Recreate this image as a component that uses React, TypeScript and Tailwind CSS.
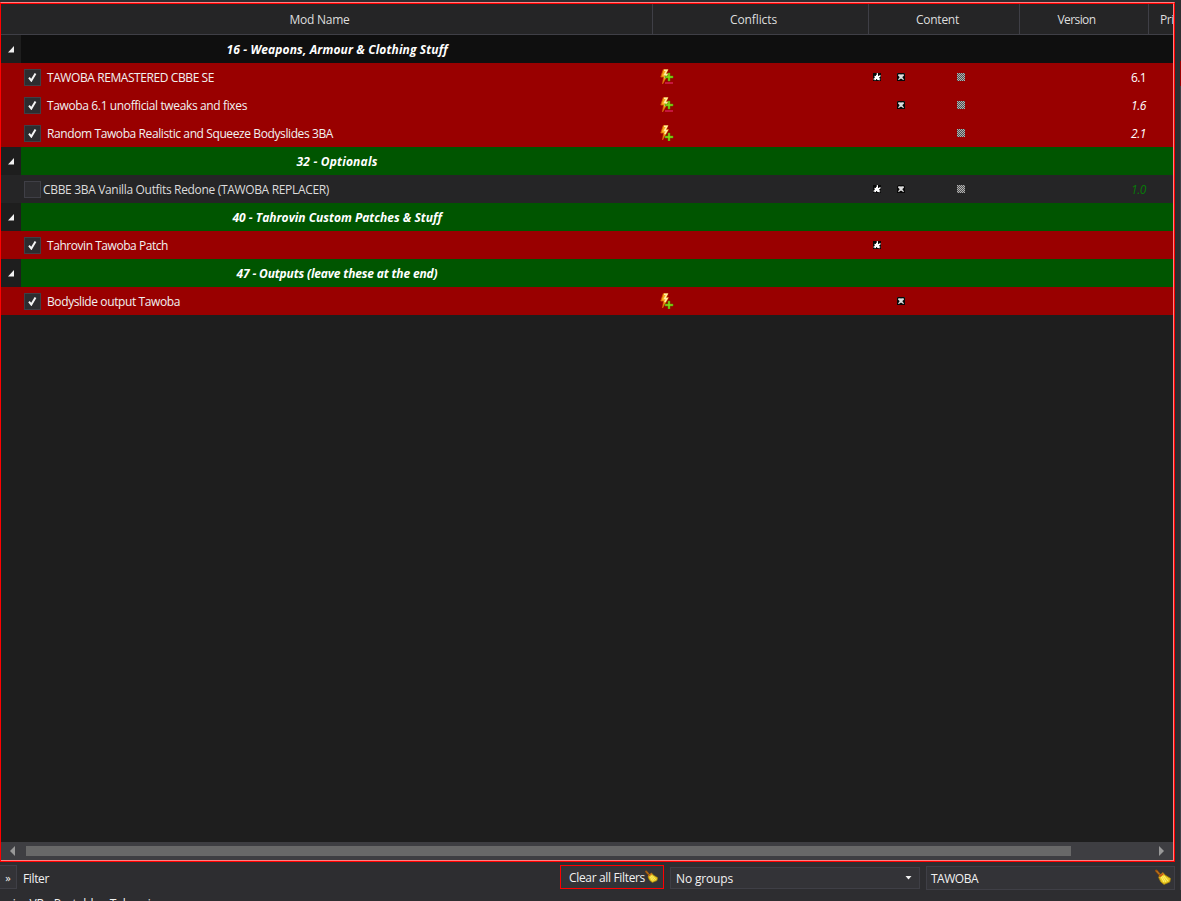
import React from "react";

type Conflict = "mixed" | "plus";
type Row =
  | { kind: "group"; title: string; tone: string; spacing: string }
  | { kind: "mod"; title: string; on: boolean; spacing: string; conflict?: Conflict; content: number[]; version?: string; versionClass?: string };

const rows: Row[] = [
  { kind: "group", title: "16 - Weapons, Armour & Clothing Stuff", tone: "bg-[#0f0f0f]", spacing: "w-[221px]" },
  { kind: "mod", title: "TAWOBA REMASTERED CBBE SE", on: true, spacing: "w-[167px]", conflict: "mixed", content: [0, 1, 3], version: "6.1", versionClass: "text-white" },
  { kind: "mod", title: "Tawoba 6.1 unofficial tweaks and fixes", on: true, spacing: "w-[200px]", conflict: "mixed", content: [1, 3], version: "1.6", versionClass: "italic text-white" },
  { kind: "mod", title: "Random Tawoba Realistic and Squeeze Bodyslides 3BA", on: true, spacing: "w-[286px]", conflict: "plus", content: [3], version: "2.1", versionClass: "italic text-white" },
  { kind: "group", title: "32 - Optionals", tone: "bg-[#005500]", spacing: "w-[81px]" },
  { kind: "mod", title: "CBBE 3BA Vanilla Outfits Redone (TAWOBA REPLACER)", on: false, spacing: "w-[286px]", content: [0, 1, 3], version: "1.0", versionClass: "italic text-[#087a08]" },
  { kind: "group", title: "40 - Tahrovin Custom Patches & Stuff", tone: "bg-[#005500]", spacing: "w-[209px]" },
  { kind: "mod", title: "Tahrovin Tawoba Patch", on: true, spacing: "w-[121px]", content: [0] },
  { kind: "group", title: "47 - Outputs (leave these at the end)", tone: "bg-[#005500]", spacing: "w-[201px]" },
  { kind: "mod", title: "Bodyslide output Tawoba", on: true, spacing: "w-[133px]", conflict: "plus", content: [1] },
];

/* Spreads the tracking so that a label takes exactly the width of its box. */
function Label({ children, className }: { children: string; className: string }) {
  const ref = React.useRef<HTMLSpanElement>(null);
  const [tracking, setTracking] = React.useState(0);
  React.useLayoutEffect(() => {
    const box = ref.current;
    if (!box) return;
    const inner = box.firstElementChild as HTMLElement;
    inner.style.letterSpacing = "0px";
    const gap = (box.clientWidth - inner.getBoundingClientRect().width) / children.length;
    inner.style.letterSpacing = `${gap}px`;
    setTracking(gap);
  }, [children]);
  return (
    <span ref={ref} className={`block shrink-0 whitespace-nowrap pt-[2px] ${className}`}>
      <span style={{ letterSpacing: `${tracking}px` }}>{children}</span>
    </span>
  );
}

const maps = [
  ["00028000", "00039000", "01199164", "05999993", "03999930", "28999971", "37918971", "01100120"],
  ["10000001", "04655640", "07888870", "01788710", "00588500", "02877820", "06400460", "00000000"],
];
const greys = ["#080808", "#222222", "#404040", "#555555", "#777777", "#888888", "#a0a0a0", "#bcbcbc", "#dddddd", "#ffffff"];

function ContentIcon({ type }: { type: number }) {
  if (type === 3) {
    return (
      <svg width="8" height="8" shapeRendering="crispEdges">
        {Array.from({ length: 64 }, (_, i) => (
          <rect key={i} x={i % 8} y={Math.floor(i / 8)} width="1" height="1" fill={((i % 8) + Math.floor(i / 8)) % 2 ? "#505050" : "#b0b0b0"} />
        ))}
      </svg>
    );
  }
  return (
    <svg width="8" height="8" shapeRendering="crispEdges">
      {maps[type].flatMap((line, y) =>
        line.split("").map((v, x) => <rect key={`${x}-${y}`} x={x} y={y} width="1" height="1" fill={greys[Number(v)]} />)
      )}
    </svg>
  );
}

function Bolt({ kind }: { kind: Conflict }) {
  const y = kind === "mixed" ? 4 : 8;
  return (
    <svg width="14" height="16">
      <path d="M3.3.5H8L6.2 4.5H8.5L2.5 15L3.7 8H.8Z" fill="#f8a719" stroke="#d26008" strokeWidth=".8" />
      <path d="M4 1.2H7L4.6 5.5H7L4.8 9" fill="none" stroke="#fff0a0" strokeWidth="1.5" />
      {kind === "mixed" && <path d="M5 13h8v2H5z" fill="#c5163e" />}
      <path d={`M8 ${y}h2v3h3v2h-3v3H8v-3H5v-2h3z`} fill="#84d414" stroke="#4d9208" strokeWidth=".5" />
    </svg>
  );
}

function Broom({ size }: { size: number }) {
  return (
    <svg width={size} height={size} viewBox="0 0 16 16">
      <path d="M1.4 1.8L5 6" stroke="#8c4c0d" strokeWidth="2.6" strokeLinecap="round" />
      <path d="M1.3 1.7L4.5 5.2" stroke="#d18420" strokeWidth="1" />
      <path d="M8 3.6L10 6L15.5 9.4L14.8 13L9 15.4L5.7 12.7L3.7 8.5L4.3 6.8Z" fill="#e8ca24" stroke="#a98109" strokeWidth=".8" />
      <path d="M7.5 7L11 13M9 7L13 12M6.3 8L9 13" stroke="#fff169" strokeWidth="1.1" />
      <path d="M4.5 7.8L8.5 4.5" stroke="#c6401c" strokeWidth="1.2" />
    </svg>
  );
}

function Check({ on }: { on: boolean }) {
  return (
    <span className="flex h-[17px] w-[17px] shrink-0 items-start justify-center border border-[#3f3f46] bg-[#2d2d30] pt-[3px]">
      {on && (
        <svg width="9" height="9">
          <path d="M1 4.7L3.3 7.6L7.5 .6" fill="none" stroke="#f4f4f4" strokeWidth="2" />
        </svg>
      )}
    </span>
  );
}

function ModRow({ row }: { row: Row }) {
  if (row.kind === "group") {
    return (
      <div className="flex h-7">
        <div className="flex w-5 items-center bg-[#1e1e1e] pl-[7px]">
          <svg width="6" height="7"><path d="M6 0V6.5H0Z" fill="#f1f1f1" /></svg>
        </div>
        <div className={`flex flex-1 items-center ${row.tone}`}>
          <div className="flex w-[632px] justify-center">
            <Label className={`font-bold italic text-white ${row.spacing}`}>{row.title}</Label>
          </div>
        </div>
      </div>
    );
  }
  return (
    <div className={`flex h-7 items-center ${row.on ? "bg-[#990000]" : "bg-[#252526]"}`}>
      <div className={`flex w-[652px] items-center pl-[23px] ${row.on ? "gap-[6px] text-[#f1f1f1]" : "gap-[2px] text-[#dcdcdc]"}`}>
        <Check on={row.on} />
        <Label className={row.spacing}>{row.title}</Label>
      </div>
      <div className="flex w-[216px] pl-[7px]">{row.conflict && <Bolt kind={row.conflict} />}</div>
      <div className="grid w-[151px] grid-cols-[24px_24px_36px_24px] pl-1">
        {[0, 1, 2, 3].map((n) => (
          <span key={n}>{row.content.includes(n) && <ContentIcon type={n} />}</span>
        ))}
      </div>
      <div className={`flex w-[126px] justify-end ${row.versionClass ?? ""}`}>
        {row.version && <Label className="w-[15px]">{row.version}</Label>}
      </div>
    </div>
  );
}

export default function App() {
  return (
    <div className="flex h-[901px] w-[1181px] overflow-hidden bg-[#2d2d30] font-['Open_Sans','Noto_Sans',sans-serif] text-[12px] leading-[18px] text-[#f1f1f1]">
      <main className="flex w-[1175px] shrink-0 flex-col pt-[2px]">
        <section className="h-[860px] shrink-0 border border-[#ff0000] border-t-[#ff8080]">
          <div className="flex h-[858px] flex-col border-b border-r border-t border-b-[#ff8080] border-r-[#ff8080] border-t-[#ff0000] bg-[#1e1e1e]">
            <header className="flex h-[31px] shrink-0 overflow-hidden border-b border-[#3f3f46] bg-[#252526] text-[#dedede]">
              <div className="flex w-[652px] items-center justify-center border-r border-[#3f3f46] pr-[14px]"><Label className="w-[60px]">Mod Name</Label></div>
              <div className="flex w-[216px] items-center justify-center border-r border-[#3f3f46] pr-[14px]"><Label className="w-[47px]">Conflicts</Label></div>
              <div className="flex w-[151px] items-center justify-center border-r border-[#3f3f46] pr-[13px]"><Label className="w-[43px]">Content</Label></div>
              <div className="flex w-[129px] items-center justify-center border-r border-[#3f3f46] pr-[15px]"><Label className="w-[38px]">Version</Label></div>
              <div className="flex w-[24px] items-center overflow-hidden pl-[11px]"><Label className="w-[37px]">Priority</Label></div>
            </header>
            <div className="flex-1">
              {rows.map((row) => <ModRow key={row.title} row={row} />)}
            </div>
            <div className="flex h-[18px] shrink-0 items-center bg-[#3e3e42]">
              <div className="flex w-[25px] pl-[9px]"><svg width="5" height="10"><path d="M5 0V10L0 5Z" fill="#999" /></svg></div>
              <div className="h-[10px] w-[1045px] bg-[#686868]" />
              <svg className="ml-[88px]" width="5" height="10"><path d="M0 0V10L5 5Z" fill="#999" /></svg>
            </div>
          </div>
        </section>
        <div className="flex h-[32px] shrink-0 items-start pt-[3px]">
          <button className="flex h-6 w-[17px] items-center justify-center border border-l-0 border-[#3f3f46] bg-[#333337] pt-px text-[11px]">»</button>
          <Label className="ml-[6px] mt-[3px] w-[26px]">Filter</Label>
          <button className="ml-[511px] flex h-6 w-[104px] items-center border border-[#ff0000] bg-[#333337] pl-2 text-left">
            <Label className="w-[76px]">Clear all Filters</Label><span className="-mt-px"><Broom size={13} /></span>
          </button>
          <div className="ml-[6px] mt-[2px] flex h-[22px] w-[250px] items-center justify-between border border-[#3f3f46] bg-[#333337] pl-[5px] pr-[7px]">
            <Label className="w-[57px]">No groups</Label>
            <svg width="7" height="4"><path d="M.5 0H6.5L3.5 3.5Z" fill="#f1f1f1" /></svg>
          </div>
          <div className="ml-[6px] mt-px flex h-6 w-[249px] items-center justify-between border border-[#3f3f46] bg-[#333337] pl-[4px] pr-[3px]">
            <Label className="w-[47px]">TAWOBA</Label><span className="-mt-[3px]"><Broom size={16} /></span>
          </div>
        </div>
        <div className="-mt-px flex h-[8px] shrink-0 overflow-hidden pl-[2px]"><Label className="w-[156px]">yrim VR - Portable - Tahrovin</Label></div>
      </main>
      <aside className="flex flex-1 justify-end">
        <div className="flex w-px flex-col pt-[61px]">
          <div className="h-[25px] bg-[#990000]" />
          <div className="h-[804px] bg-[#3f3f46]" />
        </div>
      </aside>
    </div>
  );
}
